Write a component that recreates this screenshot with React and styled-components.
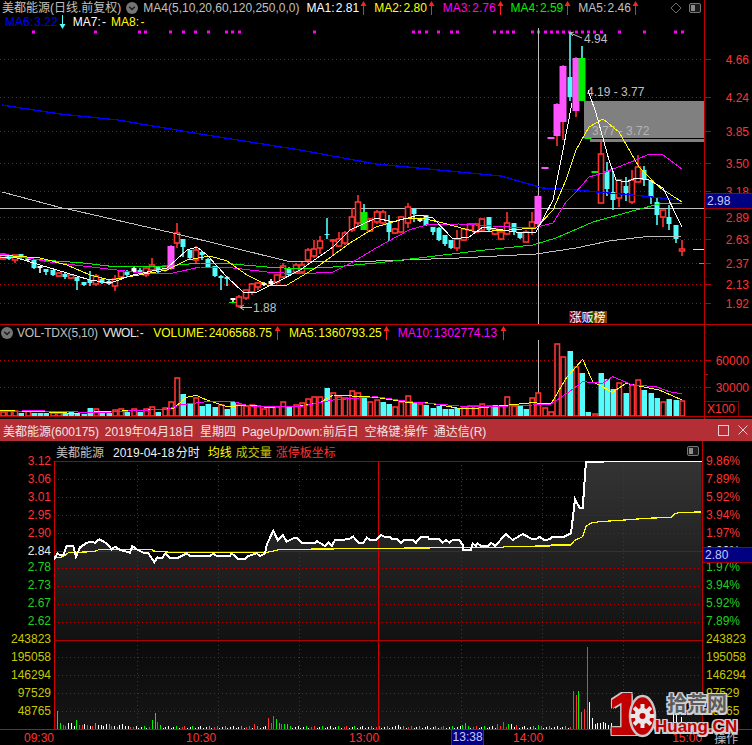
import React from "react";
import styled, { createGlobalStyle } from "styled-components";

const GlobalStyle = createGlobalStyle`
  html, body {
    margin: 0;
    background: #000;
  }
  body {
    font-family: "Liberation Sans", "Noto Sans CJK SC", sans-serif;
    font-size: 12px;
  }
`;

const RED = "#ff3232";
const LINE = "#c00000";
const CYAN = "#54fcfc";
const PINK = "#ff54ff";
const LIME = "#00f000";
const GRAY = "#c0c0c0";
const YELLOW = "#ffff00";
const MAGENTA = "#ff00ff";
const OLIVE = "#c8c800";
const GREEN = "#20d020";

// chart values were read off 3x crops: x = x0 + z / 3, y = y0 + v / 3
const read = (list, x0, y0) => list.map(([z, v]) => [x0 + z / 3, y0 + v / 3]);
const pts = (list) => list.map((p) => p.join(",")).join(" ");

const candleX = (i) => Math.round(2.7 + 6.23 * i);

// [type, bodyTop, bodyBottom, high, low]
const candles = [
  ["r", 254, 259, 253, 260], ["c", 256, 259, 255, 260], ["r", 255, 260, 255, 263], ["c", 254, 258, 254, 259],
  ["w", 258, 260, 258, 262], ["c", 260, 268, 259, 269], ["w", 266, 268, 266, 273], ["c", 269, 272, 269, 275],
  ["c", 270, 275, 270, 276], ["r", 273, 276, 272, 277], ["c", 274, 277, 273, 279], ["r", 275, 278, 275, 279],
  ["c", 277, 281, 277, 290], ["c", 282, 285, 282, 286], ["c", 280, 283, 271, 286], ["r", 276, 284, 274, 286],
  ["c", 279, 283, 278, 284], ["c", 281, 284, 280, 285], ["r", 279, 286, 275, 291], ["r", 271, 277, 270, 278],
  ["c", 272, 275, 270, 277], ["w", 268, 272, 267, 273], ["c", 270, 273, 268, 274], ["r", 268, 275, 267, 277],
  ["r", 265, 270, 258, 270], ["c", 267, 270, 266, 273], ["r", 266, 270, 265, 272], ["p", 246, 269, 245, 270],
  ["r", 233, 243, 223, 248], ["c", 239, 247, 239, 257], ["c", 250, 258, 250, 260], ["r", 250, 260, 246, 263],
  ["c", 252, 255, 251, 260], ["c", 259, 267, 258, 268], ["c", 266, 276, 266, 277], ["c", 276, 278, 275, 290],
  ["c", 277, 279, 276, 286], ["w", 298, 300, 298, 302], ["r", 297, 306, 295, 308], ["r", 290, 298, 290, 300],
  ["r", 284, 292, 283, 295], ["r", 283, 287, 282, 290], ["w", 283, 285, 282, 286], ["w", 281, 284, 279, 286],
  ["r", 275, 282, 275, 284], ["r", 266, 277, 263, 278], ["c", 268, 275, 267, 276], ["r", 265, 272, 263, 273],
  ["r", 265, 272, 262, 274], ["r", 250, 260, 248, 263], ["r", 249, 256, 240, 258], ["r", 241, 248, 236, 254],
  ["c", 234, 235, 218, 239], ["r", 240, 241, 239, 256], ["r", 239, 246, 232, 247], ["r", 233, 243, 231, 245],
  ["r", 217, 230, 208, 232], ["r", 202, 223, 195, 226], ["g", 212, 230, 204, 230], ["r", 219, 231, 218, 232],
  ["r", 212, 222, 210, 224], ["r", 212, 223, 210, 225], ["c", 223, 232, 215, 241], ["r", 229, 233, 228, 234],
  ["r", 217, 232, 216, 233], ["r", 207, 223, 203, 228], ["c", 209, 214, 208, 222], ["w", 218, 221, 218, 222],
  ["c", 215, 225, 215, 226], ["c", 227, 232, 227, 235], ["c", 228, 240, 227, 241], ["c", 235, 244, 235, 246],
  ["c", 240, 248, 240, 249], ["r", 239, 248, 230, 251], ["r", 229, 240, 229, 241], ["r", 224, 230, 223, 231],
  ["r", 224, 232, 223, 233], ["r", 219, 230, 218, 231], ["c", 217, 230, 217, 231], ["r", 229, 234, 228, 235],
  ["r", 232, 239, 230, 240], ["r", 223, 234, 212, 235], ["c", 223, 232, 223, 235], ["c", 233, 238, 232, 239],
  ["r", 232, 242, 230, 242], ["r", 222, 228, 212, 235], ["p", 196, 224, 195, 226], ["p", 167, 169, 167, 169],
  ["p", 137, 139, 137, 139], ["p", 104, 136, 103, 146], ["p", 66, 122, 65, 140], ["c", 77, 97, 32, 101],
  ["p", 58, 111, 57, 117], ["g", 58, 101, 46, 101], ["g", 137, 139, 137, 139], ["g", 171, 173, 171, 173],
  ["r", 154, 203, 142, 203], ["c", 171, 189, 162, 196], ["c", 192, 200, 172, 210], ["r", 180, 198, 180, 207],
  ["c", 186, 193, 177, 201], ["r", 180, 202, 170, 204], ["r", 167, 182, 155, 182], ["c", 170, 180, 166, 186],
  ["c", 180, 197, 180, 204], ["c", 202, 215, 198, 225], ["r", 210, 217, 210, 227], ["c", 217, 224, 205, 230],
  ["c", 225, 239, 225, 243], ["r", 249, 251, 240, 256],
];

const dotsX = [
  33, 95, 139, 145, 170, 183, 195, 208, 226, 232, 239, 314, 413, 419, 426, 438, 451, 457, 494, 501, 507, 513,
  532, 538, 545, 551, 557, 563, 569, 576, 582, 588, 594, 601, 619, 644, 675, 682,
];

const priceTicks = [
  ["4.66", 59], ["4.24", 97], ["3.85", 131], ["3.50", 163], ["3.18", 191],
  ["2.89", 217], ["2.63", 239], ["2.37", 263], ["2.13", 284], ["1.92", 303],
];

const ma6 = [[2, 105], [60, 114], [118, 120], [200, 134], [300, 150], [376, 164], [501, 176], [543, 188], [576, 190], [609, 193], [643, 196], [679, 200]];
const ma5a = [[2, 192], [62, 208]];
const ma5b = [[68, 209], [173, 233], [287, 261], [376, 261], [459, 258], [536, 254], [576, 248], [609, 241], [643, 237], [682, 236]];
const ma4 = [[0, 255], [43, 260], [83, 263], [117, 267], [167, 266], [200, 263], [233, 264], [267, 267], [300, 269], [333, 267], [376, 263], [419, 258], [476, 251], [533, 245], [556, 238], [593, 222], [636, 210], [659, 204], [682, 203]];
const ma3 = [[0, 254], [17, 256], [50, 262], [100, 268], [150, 274], [173, 273], [200, 267], [233, 268], [267, 272], [300, 274], [333, 272], [353, 262], [376, 248], [409, 230], [426, 225], [459, 224], [509, 227], [533, 228], [553, 223], [566, 202], [576, 192], [589, 177], [603, 173], [636, 160], [649, 154], [663, 155], [682, 169]];
const ma2 = [[0, 255], [40, 258], [67, 265], [90, 275], [110, 280], [133, 276], [167, 270], [187, 260], [210, 256], [227, 261], [247, 275], [267, 285], [287, 285], [317, 267], [350, 243], [376, 227], [406, 218], [426, 219], [443, 223], [476, 232], [509, 230], [536, 228], [553, 210], [566, 180], [576, 150], [589, 127], [603, 119], [619, 132], [639, 167], [659, 187], [682, 202]];
const ma1a = [[0, 257], [17, 258], [40, 265], [67, 273], [90, 280], [110, 283], [133, 275], [167, 268], [187, 250], [197, 247], [207, 255], [227, 277], [243, 292], [257, 292], [277, 282], [300, 270], [333, 247], [350, 230], [376, 218], [393, 222], [419, 215], [433, 218], [453, 239], [469, 237], [483, 227], [516, 232], [536, 232], [553, 200], [563, 150], [572, 103]];
const ma1b = [[588, 90], [596, 113], [609, 160], [616, 180], [626, 182], [636, 178], [649, 180], [663, 188], [682, 227]];

// volume bars: [height] with the colour in a parallel string, r = hollow red, c = cyan
const volHeights = [
  4, 5, 5, 3, 5, 3, 3, 3, 3, 3, 3, 4, 3, 2, 8, 7, 4, 3, 6, 7, 4, 7, 4, 7, 9, 4, 8, 14, 38, 22, 13, 18, 10, 12, 9,
  11, 7, 14, 11, 10, 11, 10, 7, 9, 9, 14, 9, 11, 13, 17, 19, 19, 28, 23, 19, 18, 25, 23, 20, 14, 16, 14, 12, 9, 14,
  20, 14, 12, 11, 8, 10, 7, 7, 8, 9, 10, 10, 12, 10, 11, 10, 19, 10, 10, 7, 18, 23, 8, 4, 72, 59, 65, 49, 43, 4, 2,
  43, 37, 27, 33, 23, 31, 36, 26, 23, 18, 14, 17, 16, 15,
];
const volColors =
  "rrrcrcccrrcccccrccrrcrcrrcrrrccrcccrccrrrrrrrrcrrrrrcrrrrrcrrccrrrcrccccccrrrrrcrrrccrrrrrrcrccrcccrcrrcccrccr";

const volYellow = [
  ...read([[0, 272], [130, 275], [220, 280], [300, 275], [400, 272], [490, 268], [520, 265], [560, 232], [590, 226], [620, 240], [680, 260], [750, 255], [800, 262], [900, 258], [960, 248], [1000, 225], [1128, 232]], 0, 320),
  ...read([[100, 248], [150, 248], [250, 265], [300, 265], [400, 255], [470, 248], [525, 252], [570, 175], [620, 118], [650, 185], [710, 217], [750, 190], [800, 200], [850, 210], [918, 240]], 376, 320),
];
const volMagenta = [
  ...read([[0, 275], [100, 272], [300, 278], [400, 272], [500, 268], [540, 255], [620, 245], [700, 245], [750, 258], [900, 260], [1000, 240], [1128, 230]], 0, 320),
  ...read([[100, 245], [250, 258], [350, 260], [470, 255], [525, 252], [580, 215], [620, 185], [680, 190], [710, 170], [770, 195], [840, 200], [880, 215], [918, 222]], 376, 320),
];

const minutePrice = [
  ...read([[162, 358], [172, 340], [180, 345], [190, 345], [200, 318], [220, 318], [228, 350], [240, 322], [258, 310], [270, 305], [285, 308], [298, 298], [320, 310], [335, 328], [345, 320], [360, 330], [390, 338], [397, 318], [410, 328], [430, 338], [445, 340], [463, 367], [472, 352], [485, 355], [497, 340], [510, 355], [530, 355], [550, 345], [560, 340], [570, 348], [630, 348], [640, 340], [650, 348], [690, 348], [695, 340], [715, 357], [735, 357], [745, 348], [770, 340], [780, 348], [795, 340], [800, 315], [820, 272], [833, 300], [848, 285], [860, 305], [880, 295], [890, 293], [905, 308], [945, 308], [950, 303], [975, 318], [985, 308], [995, 318], [1005, 300], [1045, 298], [1060, 290], [1075, 308], [1090, 308], [1100, 293], [1110, 300]], 0, 440),
  ...read([[0, 300], [15, 285], [25, 290], [40, 290], [50, 298], [65, 298], [75, 308], [85, 300], [110, 300], [120, 308], [135, 290], [155, 290], [160, 298], [190, 298], [200, 308], [210, 300], [220, 308], [230, 300], [250, 300], [262, 318], [262, 330], [285, 330], [290, 310], [300, 318], [305, 310], [315, 318], [335, 318], [345, 308], [358, 318], [375, 298], [390, 282], [410, 300], [440, 282], [470, 298], [480, 298], [490, 290], [505, 300], [520, 298], [530, 290], [565, 290], [585, 280], [597, 178], [612, 205], [620, 205], [630, 65], [977, 62]], 376, 440),
];
const minuteAvg = [
  ...read([[162, 355], [190, 350], [205, 338], [280, 335], [300, 328], [455, 328], [460, 333], [515, 337], [800, 337], [820, 333], [840, 328], [980, 327]], 0, 440),
  ...read([[0, 325], [380, 322], [385, 319], [520, 318], [525, 315], [585, 315], [595, 302], [620, 290], [630, 260], [642, 250], [670, 245], [745, 240], [810, 235], [885, 232], [895, 222], [910, 217], [976, 216]], 376, 440),
];

const minuteBars = (() => {
  const first = [
    [18, "g"], [6, "g"], [4, "r"], [3, "r"], [6, "w"], [6, "w"], [3, "w"], [9, "g"], [4, "r"], [4, "r"], [5, "w"],
    [4, "r"], [3, "w"], [3, "r"], [6, "g"], [4, "w"], [4, "w"], [3, "w"], [5, "w"], [5, "g"], [3, "r"], [3, "w"],
    [2, "g"], [4, "w"], [5, "w"], [3, "w"], [3, "w"], [2, "r"], [2, "r"],
  ];
  const peaks = {
    35: [9, "g"], 36: [16, "g"], 37: [7, "r"], 38: [4, "g"], 73: [5, "r"], 78: [11, "r"], 79: [6, "r"], 80: [13, "r"],
    81: [10, "g"], 82: [6, "g"], 83: [5, "r"], 84: [5, "g"], 85: [5, "g"], 126: [4, "w"], 150: [4, "g"], 151: [6, "g"],
    163: [5, "r"], 164: [3, "r"], 165: [7, "r"], 167: [5, "g"], 168: [5, "w"], 170: [4, "r"], 178: [4, "g"],
    191: [38, "r"], 192: [34, "r"], 193: [38, "g"], 194: [17, "g"], 195: [20, "r"], 196: [82, "r"], 197: [27, "w"],
    198: [11, "w"], 199: [5, "w"], 200: [6, "w"], 201: [6, "w"], 202: [7, "w"], 203: [6, "w"], 204: [4, "w"], 205: [6, "w"],
    228: [24, "w"], 229: [14, "w"], 231: [12, "w"],
  };
  const smallColors = "wwrwgwwrwwgw";
  return Array.from({ length: 240 }, (_, n) => {
    const [h, c] = first[n] || peaks[n] || [1 + ((n * 7) % 3), smallColors[(n * 5) % 12]];
    return { x: Math.round(57.3 + 2.7 * n) + 0.5, h, c: { r: RED, g: LIME, w: "#fff" }[c] };
  });
})();

const Page = styled.div`
  position: relative;
  width: 752px;
  height: 745px;
  overflow: hidden;
  background: #000;
`;

const KlinePanel = styled.section`
  display: flex;
  box-sizing: border-box;
  height: 325px;
  border-bottom: 1px solid ${LINE};
`;

const VolPanel = styled.section`
  display: flex;
  box-sizing: border-box;
  height: 92px;
  border-bottom: 1px solid ${LINE};
`;

const ChartColumn = styled.div`
  width: 704px;
  flex: none;
`;

const Legend = styled.div`
  box-sizing: border-box;
  height: 28px;
  padding: 1px 3px 0 2px;
`;

const LegendRow = styled.div`
  display: flex;
  align-items: center;
  height: 14px;
  line-height: 14px;
  white-space: nowrap;
`;

const VolLegend = styled(LegendRow)`
  height: 15px;
  padding-left: 1px;
  padding-right: 3px;
`;

const Item = styled.span`
  color: ${(p) => p.$c || GRAY};
  margin-left: ${(p) => p.$gap || 0}px;
  letter-spacing: ${(p) => p.$squeeze || 0}px;
  word-spacing: -2px;
`;

const ArrowBox = styled.svg`
  flex: none;
  margin-left: ${(p) => p.$gap ?? 1}px;
`;

const Spring = styled.span`
  flex: 1;
`;

const Chart = styled.svg`
  display: block;
`;

const ChartText = styled.text`
  font-family: "Liberation Sans", "Noto Sans CJK SC", sans-serif;
  font-size: 12px;
  fill: ${(p) => p.$c || GRAY};
`;

const AxisColumn = styled.div`
  position: relative;
  box-sizing: border-box;
  width: 48px;
  flex: none;
  border-left: 1px solid ${LINE};
`;

const ValueBox = styled.div`
  position: absolute;
  left: 0;
  right: 0;
  top: ${(p) => p.$top}px;
  box-sizing: border-box;
  height: 16px;
  padding-left: 2px;
  line-height: 14px;
  color: #c8c8ff;
  background: #000080;
  border-top: 1px solid #a00000;
  border-bottom: 1px solid #a00000;
`;

const ScaleTag = styled.div`
  position: absolute;
  left: 0;
  bottom: 0;
  box-sizing: border-box;
  width: 34px;
  height: 15px;
  padding-left: 2px;
  line-height: 14px;
  color: ${RED};
  border: 1px solid #900000;
  border-left: none;
  border-bottom: none;
`;

const AxisStub = styled.div`
  width: 1px;
  height: 2px;
  margin-left: 704px;
  background: ${LINE};
`;

const TitleBar = styled.header`
  display: flex;
  align-items: center;
  height: 22px;
  padding: 0 4px 0 3px;
  background: #b32f35;
  color: #f3e2e2;
  white-space: nowrap;
`;

const TitleText = styled.span`
  flex: 1;
  word-spacing: 2.5px;
`;

const WinButton = styled.svg`
  display: block;
  margin-left: 9px;
`;

const MinuteBody = styled.section`
  display: flex;
  height: 288px;
`;

const SideAxis = styled.div`
  box-sizing: border-box;
  width: 54px;
  flex: none;
  padding: 11px 3px 0 0;
  text-align: right;
`;

const RightAxis = styled(SideAxis)`
  position: relative;
  width: 50px;
  padding: 11px 0 0 3px;
  text-align: left;
  border-left: 1px solid ${LINE};
`;

const AxisLabel = styled.div`
  height: 18px;
  line-height: 18px;
  color: ${(p) => p.$c};
  margin-top: ${(p) => p.$shift || 0}px;
`;

const MinuteColumn = styled.div`
  width: 648px;
  flex: none;
`;

const MinuteHeader = styled.div`
  display: flex;
  align-items: center;
  height: 20px;
  padding: 0 3px 0 2px;
  white-space: nowrap;
`;

const XAxis = styled.footer`
  display: flex;
  align-items: center;
  box-sizing: border-box;
  height: 16px;
  border-top: 1px solid #e00000;
`;

const TimeLabel = styled.span`
  margin-left: ${(p) => p.$gap}px;
  color: ${RED};
`;

const CursorTime = styled.span`
  box-sizing: border-box;
  width: 33px;
  height: 15px;
  margin-left: ${(p) => p.$gap}px;
  line-height: 14px;
  text-align: center;
  color: #c8c8ff;
  background: #000080;
  border-left: 1px solid ${LINE};
  border-right: 1px solid ${LINE};
`;

const Watermark = styled.div`
  position: absolute;
  left: 609px;
  top: 690px;
  display: flex;
  pointer-events: none;
`;

const halo = (c, r) =>
  `${r}px 0 0 ${c}, -${r}px 0 0 ${c}, 0 ${r}px 0 ${c}, 0 -${r}px 0 ${c}, ${r}px ${r}px 0 ${c}, -${r}px ${r}px 0 ${c}, ${r}px -${r}px 0 ${c}, -${r}px -${r}px 0 ${c}`;

const LogoOne = styled.span`
  width: 19px;
  margin-top: -5px;
  font-size: 58px;
  line-height: 58px;
  font-weight: 700;
  color: #c00000;
  -webkit-text-stroke: 2px #c00000;
  text-shadow: ${halo("#c8c8c8", 2)};
`;

const LogoWheel = styled.svg`
  display: block;
  flex: none;
  margin-top: 3px;
`;

const LogoWords = styled.div`
  display: flex;
  flex-direction: column;
  margin-left: -2px;
`;

const LogoName = styled.span`
  margin-left: 12px;
  font-size: 20px;
  line-height: 28px;
  font-weight: 700;
  color: #5c5c5c;
  text-shadow: ${halo("#d0d0d0", 1.5)};
`;

const LogoSite = styled.span`
  font-size: 17px;
  line-height: 17px;
  font-weight: 700;
  color: #c00000;
  text-shadow: ${halo("#d0d0d0", 1.5)};
`;

const UpArrow = ({ gap }) => (
  <ArrowBox $gap={gap} width="7" height="14" viewBox="0 0 7 14">
    <path d="M3.5 0 L6.5 5 L4 5 L4 14 L3 14 L3 5 L0.5 5 Z" fill="#ff2020" />
  </ArrowBox>
);

const DownArrow = () => (
  <ArrowBox $gap={1} width="7" height="14" viewBox="0 0 7 14">
    <path d="M3 0 L4 0 L4 9 L6.5 9 L3.5 14 L0.5 9 L3 9 Z" fill={CYAN} />
  </ArrowBox>
);

const RoundToggle = ({ gap }) => (
  <ArrowBox $gap={gap} width="12" height="12" viewBox="0 0 12 12">
    <circle cx="6" cy="6" r="6" fill="#757575" />
    <path d="M3.2 4.8 L6 7.6 L8.8 4.8" fill="none" stroke="#1c1c1c" strokeWidth="1.4" />
  </ArrowBox>
);

const PanelIcon = () => (
  <ArrowBox $gap={0} width="12" height="10" viewBox="0 0 12 10">
    <rect x="0.5" y="0.5" width="11" height="9" rx="1.5" fill="#1a1a1a" stroke="#777" />
    <rect x="2" y="2" width="4" height="6" fill="#8a8a8a" />
  </ArrowBox>
);

const Diamond = () => (
  <ArrowBox $gap={0} width="12" height="12" viewBox="0 0 12 12" style={{ marginRight: 7 }}>
    <path d="M6 1 L11 6 L6 11 L1 6 Z" fill="none" stroke="#6a6a6a" />
  </ArrowBox>
);

const HLine = ({ y, x1, x2, dotted, color = LINE }) => (
  <line
    x1={x1}
    x2={x2}
    y1={y + 0.5}
    y2={y + 0.5}
    stroke={color}
    strokeDasharray={dotted ? "1 3" : undefined}
    shapeRendering="crispEdges"
  />
);

const VLine = ({ x, y1, y2, dotted, color = LINE }) => (
  <line
    x1={x + 0.5}
    x2={x + 0.5}
    y1={y1}
    y2={y2}
    stroke={color}
    strokeDasharray={dotted ? "1 3" : undefined}
    shapeRendering="crispEdges"
  />
);

const Poly = ({ list, color, width = 1 }) => (
  <polyline points={pts(list)} fill="none" stroke={color} strokeWidth={width} shapeRendering="crispEdges" />
);

const Candle = ({ c, i }) => {
  const [type, top, bottom, high, low] = c;
  const x = candleX(i);
  if (type === "r") {
    return (
      <g>
        <line x1={x} x2={x} y1={high} y2={low} stroke={RED} strokeWidth="1.6" />
        <rect x={x - 2.5} y={top} width="5" height={bottom - top} fill="#000" stroke={RED} strokeWidth="1.6" />
      </g>
    );
  }
  const fill = { c: CYAN, p: PINK, g: LIME, w: "#fff" }[type];
  const wick = type === "p" ? RED : type === "w" ? "#fff" : CYAN;
  const w = type === "p" || type === "g" ? 7 : 5;
  return (
    <g>
      <line x1={x} x2={x} y1={high} y2={low} stroke={wick} strokeWidth="1.6" />
      <rect x={x - w / 2} y={top} width={w} height={bottom - top} fill={fill} />
    </g>
  );
};

const KlineChart = () => (
  <Chart width="704" height="296" viewBox="0 28 704 296">
    {priceTicks.map(([, y]) => (
      <HLine key={y} y={y} x1={0} x2={704} dotted />
    ))}
    {dotsX.map((x) => (
      <rect key={x} x={x - 1} y="30.5" width="3" height="3" fill={MAGENTA} />
    ))}
    <VLine x={538} y1={28} y2={324} color={GRAY} />
    <rect x="584" y="101" width="120" height="37" fill="#808080" />
    <rect x="590" y="139" width="114" height="3" fill="#808080" />
    <ChartText x="587" y="96">4.19 - 3.77</ChartText>
    <ChartText x="592" y="135" $c="#b4b4b4">3.77 - 3.72</ChartText>
    <HLine y={208} x1={0} x2={704} color={GRAY} />
    {candles.map((c, i) => (
      <Candle key={i} c={c} i={i} />
    ))}
    <Poly list={ma6} color="#0000ff" width={1.3} />
    <Poly list={ma5a} color={GRAY} />
    <Poly list={ma5b} color={GRAY} />
    <Poly list={ma4} color={LIME} />
    <Poly list={ma3} color={MAGENTA} />
    <Poly list={ma2} color={YELLOW} />
    <Poly list={ma1a} color="#fff" />
    <Poly list={ma1b} color="#fff" />
    <path d="M570 33 L582 38 M570 33 L574 32 M570 33 L573 36" stroke={GRAY} fill="none" />
    <ChartText x="584" y="43">4.94</ChartText>
    <path d="M240 307.5 L252 307.5 M240 307.5 L244 305 M240 307.5 L244 310" stroke={GRAY} fill="none" />
    <ChartText x="253" y="312">1.88</ChartText>
    <rect x="229" y="302" width="7" height="1" fill={LIME} />
    <rect x="569" y="311" width="13" height="12" fill="#800000" />
    <rect x="582" y="311" width="7" height="12" fill="#000080" />
    <rect x="589" y="311" width="5" height="12" fill="#006000" />
    <rect x="594" y="311" width="13" height="12" fill="#804000" />
    <ChartText x="569.5" y="321.5" $c="#fff">涨贩榜</ChartText>
    <rect x="693" y="249" width="11" height="1" fill={YELLOW} />
    <rect x="699" y="263" width="5" height="1" fill={LIME} />
  </Chart>
);

const PriceAxis = () => (
  <AxisColumn>
    <Chart width="47" height="324" viewBox="0 0 47 324">
      {priceTicks.map(([label, y]) => (
        <g key={label}>
          <HLine y={y} x1={0} x2={6} />
          <ChartText x="44" y={y + 4.5} textAnchor="end" $c={RED}>{label}</ChartText>
        </g>
      ))}
    </Chart>
    <ValueBox $top={193}>2.98</ValueBox>
  </AxisColumn>
);

const VolumeChart = () => (
  <Chart width="704" height="76" viewBox="0 340 704 76">
    <HLine y={360} x1={0} x2={704} dotted />
    <HLine y={387} x1={0} x2={704} dotted />
    <VLine x={538} y1={340} y2={416} color={GRAY} />
    {volHeights.map((h, i) => {
      const x = candleX(i);
      return volColors[i] === "c" ? (
        <rect key={i} x={x - 2.5} y={416 - h} width="5.5" height={h} fill={CYAN} />
      ) : (
        <rect key={i} x={x - 2} y={416 - h} width="4.5" height={h} fill="#000" stroke={RED} strokeWidth="1.6" />
      );
    })}
    <Poly list={volYellow} color={YELLOW} />
    <Poly list={volMagenta} color={MAGENTA} />
  </Chart>
);

const VolumeAxis = () => (
  <AxisColumn>
    <Chart width="47" height="91" viewBox="0 325 47 91">
      <HLine y={360} x1={0} x2={6} />
      <HLine y={374} x1={0} x2={3} />
      <HLine y={387} x1={0} x2={6} />
      <ChartText x="44" y="364.5" textAnchor="end" $c={RED}>60000</ChartText>
      <ChartText x="44" y="391.5" textAnchor="end" $c={RED}>30000</ChartText>
    </Chart>
    <ScaleTag>X100</ScaleTag>
  </AxisColumn>
);

const minuteRows = [479, 497, 515, 533, 568, 586, 604, 622, 657, 675, 693, 711];
const minuteCols = [137, 218, 299, 461, 542, 623];

const MinuteChart = () => (
  <Chart width="648" height="268" viewBox="54 461 648 268">
    <defs>
      <linearGradient id="fade" gradientUnits="userSpaceOnUse" x1="0" x2="0" y1="461" y2="640">
        <stop offset="0" stopColor="#343434" />
        <stop offset="1" stopColor="#121212" />
      </linearGradient>
      <linearGradient id="fadeVol" gradientUnits="userSpaceOnUse" x1="0" x2="0" y1="640" y2="729">
        <stop offset="0" stopColor="#0a0a0a" />
        <stop offset="1" stopColor="#161616" />
      </linearGradient>
    </defs>
    <polygon points={`${pts(minutePrice)} 702,640 54,640`} fill="url(#fade)" />
    <rect x="54" y="640" width="648" height="89" fill="url(#fadeVol)" />
    <HLine y={461} x1={54} x2={702} color="#a80000" />
    {minuteRows.map((y) => (
      <HLine key={y} y={y} x1={54} x2={702} dotted />
    ))}
    {minuteCols.map((x) => (
      <VLine key={x} x={x} y1={461} y2={729} dotted />
    ))}
    <VLine x={54} y1={461} y2={729} color="#d00000" />
    <VLine x={378} y1={461} y2={729} color="#d00000" />
    <HLine y={551} x1={54} x2={702} color="#a80000" />
    <HLine y={640} x1={54} x2={702} color="#b00000" />
    {minuteBars.map((b) => (
      <line key={b.x} x1={b.x} x2={b.x} y1={729 - b.h} y2={729} stroke={b.c} shapeRendering="crispEdges" />
    ))}
    <Poly list={minuteAvg} color={YELLOW} width={1.2} />
    <Poly list={minutePrice} color="#fff" width={2} />
  </Chart>
);

const leftLabels = [
  ["3.12", RED], ["3.06", RED], ["3.01", RED], ["2.95", RED], ["2.90", RED], ["2.84", "#e8e8e8"],
  ["2.78", GREEN], ["2.73", GREEN], ["2.67", GREEN], ["2.62", GREEN],
  ["243823", OLIVE], ["195058", OLIVE], ["146294", OLIVE], ["97529", OLIVE], ["48765", OLIVE],
];
const rightLabels = [
  ["9.86%", RED], ["7.89%", RED], ["5.92%", RED], ["3.94%", RED], ["1.97%", RED], ["0.00%", "#e8e8e8"],
  ["1.97%", GREEN], ["3.94%", GREEN], ["5.92%", GREEN], ["7.89%", GREEN],
  ["243823", OLIVE], ["195058", OLIVE], ["146294", OLIVE], ["97529", OLIVE], ["48765", OLIVE],
];

const teeth = Array.from({ length: 8 }, (_, i) => i * 45);

const App = () => (
  <Page>
    <GlobalStyle />
    <KlinePanel>
      <ChartColumn>
        <Legend>
          <LegendRow>
            <Item>美都能源(日线.前复权)</Item>
            <RoundToggle gap={5} />
            <Item $gap={5}>MA4(5,10,20,60,120,250,0,0)</Item>
            <Item $gap={7} $c="#fff">MA1: 2.81</Item>
            <UpArrow gap={1} />
            <Item $gap={7} $c={YELLOW}>MA2: 2.80</Item>
            <UpArrow gap={1} />
            <Item $gap={8} $c={MAGENTA}>MA3: 2.76</Item>
            <UpArrow gap={1} />
            <Item $gap={7} $c={LIME}>MA4: 2.59</Item>
            <UpArrow gap={1} />
            <Item $gap={7}>MA5: 2.46</Item>
            <UpArrow gap={1} />
            <Spring />
            <Diamond />
            <PanelIcon />
          </LegendRow>
          <LegendRow>
            <Item $gap={3} $c="#0000ff">MA6: 3.22</Item>
            <DownArrow />
            <Item $gap={7} $c="#fff">MA7: -</Item>
            <Item $gap={5} $c={YELLOW}>MA8: -</Item>
          </LegendRow>
        </Legend>
        <KlineChart />
      </ChartColumn>
      <PriceAxis />
    </KlinePanel>
    <VolPanel>
      <ChartColumn>
        <VolLegend>
          <RoundToggle gap={0} />
          <Item $gap={4} $squeeze={-0.2}>VOL-TDX(5,10)</Item>
          <Item $gap={5} $c="#e8e8e8" $squeeze={-0.5}>VWOL: -</Item>
          <Item $gap={10} $c={YELLOW}>VOLUME: 2406568.75</Item>
          <UpArrow gap={2} />
          <Item $gap={8} $c={YELLOW}>MA5: 1360793.25</Item>
          <UpArrow gap={1} />
          <Item $gap={8} $c={MAGENTA}>MA10: 1302774.13</Item>
          <UpArrow gap={3} />
        </VolLegend>
        <VolumeChart />
      </ChartColumn>
      <VolumeAxis />
    </VolPanel>
    <AxisStub />
    <TitleBar>
      <TitleText>美都能源(600175) 2019年04月18日 星期四 PageUp/Down:前后日 空格键:操作 通达信(R)</TitleText>
      <WinButton width="11" height="11" viewBox="0 0 11 11">
        <rect x="0.5" y="0.5" width="10" height="10" fill="none" stroke="#ecd0d0" />
      </WinButton>
      <WinButton width="10" height="10" viewBox="0 0 10 10">
        <path d="M0.5 0.5 L9.5 9.5 M9.5 0.5 L0.5 9.5" stroke="#ecd0d0" />
      </WinButton>
    </TitleBar>
    <MinuteBody>
      <SideAxis>
        {leftLabels.map(([label, c], i) => (
          <AxisLabel key={label} $c={c} $shift={i === 6 ? -2 : 0}>{label}</AxisLabel>
        ))}
      </SideAxis>
      <MinuteColumn>
        <MinuteHeader>
          <Item>美都能源</Item>
          <Item $gap={9} $c="#f0f0f0">2019-04-18 分时</Item>
          <Item $gap={8} $c={YELLOW}>均线</Item>
          <Item $gap={4} $c={OLIVE}>成交量</Item>
          <Item $gap={4} $c={RED}>涨停板坐标</Item>
          <Spring />
          <PanelIcon />
        </MinuteHeader>
        <MinuteChart />
      </MinuteColumn>
      <RightAxis>
        {rightLabels.map(([label, c], i) => (
          <AxisLabel key={i} $c={c} $shift={i === 6 ? -2 : 0}>{label}</AxisLabel>
        ))}
        <ValueBox $top={106}>2.80</ValueBox>
      </RightAxis>
    </MinuteBody>
    <XAxis>
      <TimeLabel $gap={24}>09:30</TimeLabel>
      <TimeLabel $gap={132}>10:30</TimeLabel>
      <TimeLabel $gap={133}>13:00</TimeLabel>
      <CursorTime $gap={72}>13:38</CursorTime>
      <TimeLabel $gap={29}>14:00</TimeLabel>
      <TimeLabel $gap={129}>15:00</TimeLabel>
      <Item $gap={12}>操作</Item>
    </XAxis>
    <Watermark>
      <LogoOne>1</LogoOne>
      <LogoWheel width="29" height="46" viewBox="0 0 29 46">
        <ellipse cx="14.5" cy="23" rx="12.5" ry="20" fill="#c00000" stroke="#c8c8c8" strokeWidth="2.5" />
        {teeth.map((a) => (
          <rect key={a} x="12.5" y="11" width="4" height="6" fill="#e8e8e8" transform={`rotate(${a} 14.5 23)`} />
        ))}
        <circle cx="14.5" cy="23" r="8" fill="#e8e8e8" />
        <circle cx="14.5" cy="23" r="3" fill="#c00000" />
      </LogoWheel>
      <LogoWords>
        <LogoName>拾荒网</LogoName>
        <LogoSite>Huang.CN</LogoSite>
      </LogoWords>
    </Watermark>
  </Page>
);

export default App;
